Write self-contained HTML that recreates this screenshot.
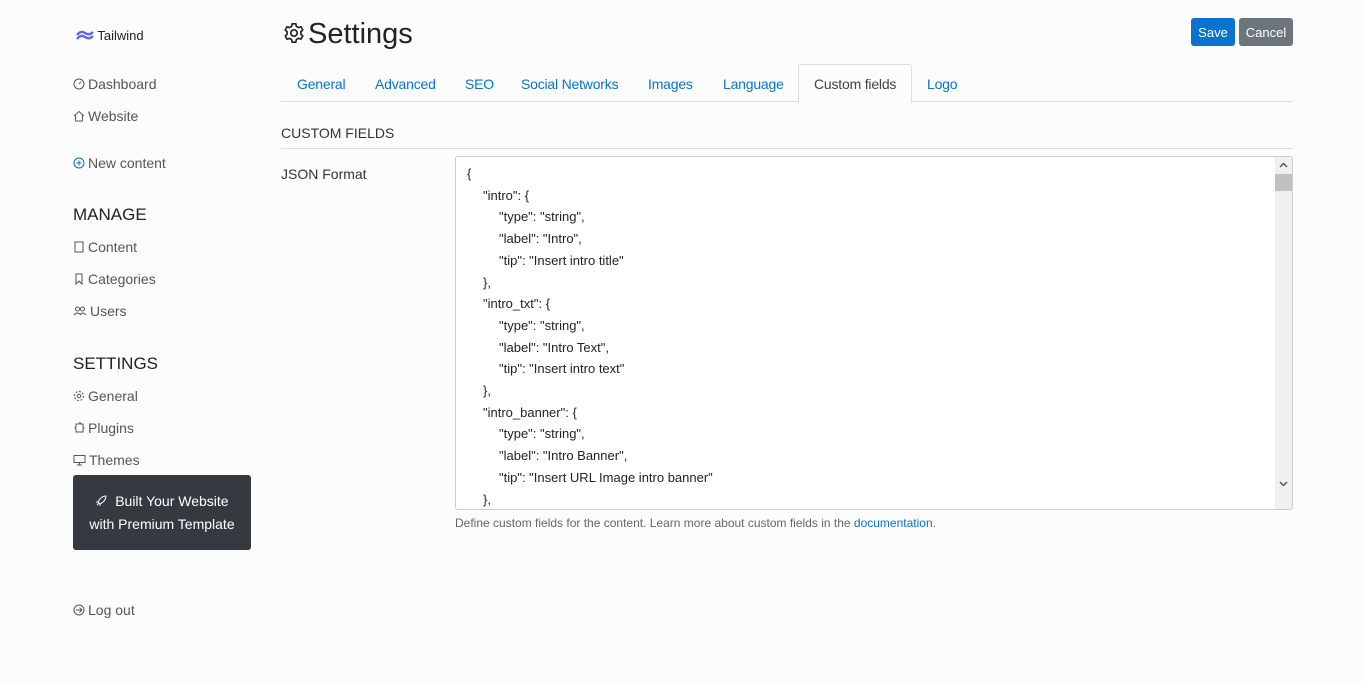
<!DOCTYPE html>
<html><head><meta charset="utf-8"><style>
body{margin:0;background:#fcfcfc;font-family:"Liberation Sans",sans-serif;color:#333;width:1366px;height:682px;overflow:hidden;position:relative;font-size:14px}
.a{position:absolute;white-space:nowrap}
.nav{color:#555;font-size:14px}
.nav svg{vertical-align:-1px;margin-right:3px}
.h{font-size:17px;color:#222}
.tab{position:absolute;top:76px;color:#0a72d0;font-size:14px;letter-spacing:-0.2px}
.code{font-size:13px;line-height:21.7px;color:#222;white-space:nowrap}
.i1{padding-left:16px}.i2{padding-left:32px}
</style></head><body>
<div class="a" style="left:76px;top:28px;font-size:13px;color:#222">
<svg width="18" height="12" viewBox="0 0 18 12" style="vertical-align:-1px"><path d="M1 6 Q5 1 9 4 T17 3 M1 10 Q5 5 9 8 T17 7" stroke="#6366f1" stroke-width="2.4" fill="none"/></svg> Tailwind</div>
<div class="a nav" style="left:73px;top:76px"><svg width="12" height="12" viewBox="0 0 12 12"><circle cx="6" cy="6" r="5" stroke="#555" fill="none"/><path d="M6 6 L8 3.5" stroke="#555"/></svg>Dashboard</div>
<div class="a nav" style="left:73px;top:108px"><svg width="12" height="12" viewBox="0 0 12 12"><path d="M1 6 L6 1.5 L11 6 M2.5 5 V11 H9.5 V5" stroke="#555" fill="none"/></svg>Website</div>
<div class="a nav" style="left:73px;top:155px"><svg width="12" height="12" viewBox="0 0 12 12"><circle cx="6" cy="6" r="5" stroke="#0a72d0" fill="none"/><path d="M6 3.5 V8.5 M3.5 6 H8.5" stroke="#0a72d0"/></svg>New content</div>
<div class="a h" style="left:73px;top:205px">MANAGE</div>
<div class="a nav" style="left:73px;top:239px"><svg width="12" height="12" viewBox="0 0 12 12"><rect x="2" y="1" width="8" height="10" stroke="#555" fill="none"/></svg>Content</div>
<div class="a nav" style="left:73px;top:271px"><svg width="12" height="12" viewBox="0 0 12 12"><path d="M3 1 H9 V11 L6 8 L3 11Z" stroke="#555" fill="none"/></svg>Categories</div>
<div class="a nav" style="left:73px;top:303px"><svg width="14" height="12" viewBox="0 0 14 12"><circle cx="4.5" cy="4" r="2" stroke="#555" fill="none"/><circle cx="9.5" cy="4" r="2" stroke="#555" fill="none"/><path d="M1 10 Q4.5 6 8 10 M7 10 Q9.5 6 13 10" stroke="#555" fill="none"/></svg>Users</div>
<div class="a h" style="left:73px;top:354px">SETTINGS</div>
<div class="a nav" style="left:73px;top:388px"><svg width="12" height="12" viewBox="0 0 12 12"><circle cx="6" cy="6" r="4.5" stroke="#555" stroke-dasharray="2 1.5" fill="none"/><circle cx="6" cy="6" r="1.8" stroke="#555" fill="none"/></svg>General</div>
<div class="a nav" style="left:73px;top:420px"><svg width="12" height="12" viewBox="0 0 12 12"><path d="M3 2 H6 Q6 0 7.5 1 V2 H10 V5 Q12 5.5 10 7 V10 H3 V7 Q1 6 3 5Z" stroke="#555" fill="none"/></svg>Plugins</div>
<div class="a nav" style="left:73px;top:452px"><svg width="13" height="12" viewBox="0 0 13 12"><rect x="1" y="1.5" width="11" height="7" stroke="#555" fill="none"/><path d="M4 11 H9 M6.5 8.5 V11" stroke="#555"/></svg>Themes</div>
<div class="a" style="left:73px;top:475px;width:178px;height:75px;background:#343a40;border-radius:3px;color:#fff;text-align:center;font-size:14px;line-height:23px;padding-top:15px;box-sizing:border-box">
<svg width="12" height="12" viewBox="0 0 12 12" style="vertical-align:-1px"><path d="M11 1 Q6 1 3 7 L5 9 Q11 6 11 1Z M3 7 L1 7 M5 9 L5 11 M2 10 L4 8" stroke="#fff" fill="none"/></svg>&nbsp; Built Your Website<br>with Premium Template</div>
<div class="a nav" style="left:73px;top:602px"><svg width="12" height="12" viewBox="0 0 12 12"><circle cx="6" cy="6" r="5" stroke="#555" fill="none"/><path d="M3 6 H9 M6.5 3.5 L9 6 L6.5 8.5" stroke="#555" fill="none"/></svg>Log out</div>

<div class="a" style="left:283px;top:18px;font-size:29px;color:#222"><svg width="22" height="22" viewBox="0 0 24 24" style="vertical-align:-1px;margin-right:3px"><circle cx="12" cy="12" r="3.5" stroke="#222" stroke-width="1.8" fill="none"/><path d="M10 2h4l.6 2.8 2.3 1.3 2.7-.9 2 3.5-2.1 1.9v2.7l2.1 1.9-2 3.5-2.7-.9-2.3 1.3L14 22h-4l-.6-2.8-2.3-1.3-2.7.9-2-3.5 2.1-1.9v-2.7L2.4 8.7l2-3.5 2.7.9 2.3-1.3z" stroke="#222" stroke-width="1.8" fill="none" stroke-linejoin="round"/></svg>Settings</div>
<div class="a" style="left:1191px;top:18px;width:44px;height:28px;background:#0a72d0;color:#fff;border-radius:3px;text-align:center;line-height:29px;font-size:13px">Save</div>
<div class="a" style="left:1239px;top:18px;width:54px;height:28px;background:#6c757d;color:#fff;border-radius:3px;text-align:center;line-height:29px;font-size:13px">Cancel</div>

<div class="a" style="left:281px;top:101px;width:1012px;border-top:1px solid #ddd"></div>
<div class="a" style="left:798px;top:64px;width:112px;height:37px;border:1px solid #ddd;border-bottom:1px solid #fcfcfc;border-radius:3px 3px 0 0;background:#fcfcfc"></div>
<div class="tab" style="left:297px">General</div>
<div class="tab" style="left:375px">Advanced</div>
<div class="tab" style="left:465px">SEO</div>
<div class="tab" style="left:521px">Social Networks</div>
<div class="tab" style="left:648px">Images</div>
<div class="tab" style="left:723px">Language</div>
<div class="tab" style="left:814px;color:#444">Custom fields</div>
<div class="tab" style="left:927px">Logo</div>

<div class="a" style="left:281px;top:125px;font-size:14px;color:#333">CUSTOM FIELDS</div>
<div class="a" style="left:281px;top:148px;width:1012px;border-top:1px solid #ddd"></div>
<div class="a" style="left:281px;top:166px;color:#333">JSON Format</div>
<div class="a" style="left:455px;top:156px;width:838px;height:354px;border:1px solid #ccc;border-radius:3px;background:#fff;box-sizing:border-box;overflow:hidden">
<div class="code" style="position:absolute;left:11px;top:6px">
<div>{</div>
<div class="i1">"intro": {</div>
<div class="i2">"type": "string",</div>
<div class="i2">"label": "Intro",</div>
<div class="i2">"tip": "Insert intro title"</div>
<div class="i1">},</div>
<div class="i1">"intro_txt": {</div>
<div class="i2">"type": "string",</div>
<div class="i2">"label": "Intro Text",</div>
<div class="i2">"tip": "Insert intro text"</div>
<div class="i1">},</div>
<div class="i1">"intro_banner": {</div>
<div class="i2">"type": "string",</div>
<div class="i2">"label": "Intro Banner",</div>
<div class="i2">"tip": "Insert URL Image intro banner"</div>
<div class="i1">},</div>
</div>
<div style="position:absolute;right:0;top:0;width:17px;height:352px;background:#f0f0f0"></div>
<div style="position:absolute;right:0;top:17px;width:17px;height:17px;background:#c1c1c1"></div>
<svg style="position:absolute;right:4px;top:5px" width="9" height="6" viewBox="0 0 9 6"><path d="M1 5 L4.5 1.5 L8 5" stroke="#555" stroke-width="1.5" fill="none"/></svg>
<svg style="position:absolute;right:4px;top:324px" width="9" height="6" viewBox="0 0 9 6"><path d="M1 1 L4.5 4.5 L8 1" stroke="#555" stroke-width="1.5" fill="none"/></svg>
</div>
<div class="a" style="left:455px;top:516px;font-size:12px;color:#666">Define custom fields for the content. Learn more about custom fields in the <span style="color:#0a72d0">documentation</span>.</div>
</body></html>
